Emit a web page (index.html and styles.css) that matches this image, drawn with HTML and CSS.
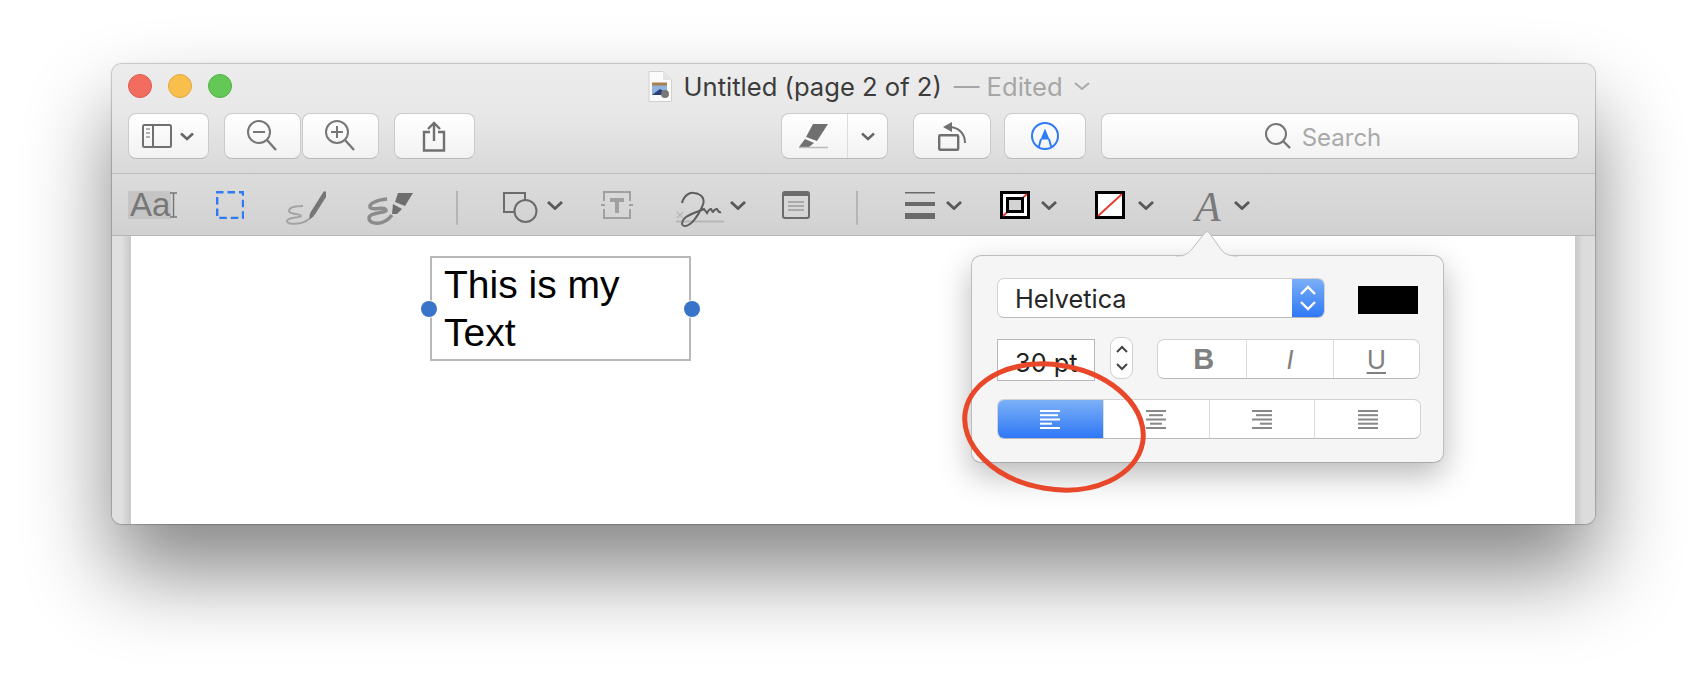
FILE: index.html
```html
<!DOCTYPE html>
<html lang="en">
<head>
    <meta charset="UTF-8">
    <meta name="viewport" content="width=device-width, initial-scale=1.0">
    <title>Untitled (page 2 of 2)</title>
    <link rel="stylesheet" href="styles.css">
</head>
<body>
    <div class="window">
        <div class="titlebar">
            <div class="lights">
                <span class="light red"></span>
                <span class="light yellow"></span>
                <span class="light green"></span>
            </div>
            <div class="title">
                <svg class="doc-icon" width="24" height="31" viewBox="0 0 24 31">
                    <path d="M1 .5H15L23.5 9V30.5H1Z" fill="#fbfbfb" stroke="#d0d0d0"/>
                    <path d="M15 .5V9H23.5Z" fill="#e4e4e4"/>
                    <rect x="4" y="14" width="15" height="10" fill="#8fb2de"/>
                    <rect x="4" y="11.5" width="15" height="3" fill="#a8814f"/>
                    <path d="M4 24L12 18L19 22V24Z" fill="#2d3f7c"/>
                    <circle cx="17" cy="23" r="4" fill="#777"/>
                </svg>
                <span class="doc-name">Untitled (page 2 of 2)</span>
                <span class="doc-state">— Edited</span>
                <svg class="title-chev" width="16" height="8" viewBox="0 0 16 8"><path d="M1 1L8 7L15 1" fill="none" stroke="#aaa" stroke-width="2"/></svg>
            </div>
        </div>

        <div class="toolbar">
            <button class="btn btn-sidebar">
                <svg width="30" height="24" viewBox="0 0 30 24" fill="none" stroke="#707070" stroke-width="2">
                    <rect x="1" y="1" width="28" height="22" rx="1.5"/>
                    <path d="M11 1V23"/>
                    <path d="M4 5H8M4 9H8M4 13H8" stroke-width="1.5" stroke="#999"/>
                </svg>
                <svg width="14" height="9" viewBox="0 0 14 9"><path d="M1 1.5L7 7L13 1.5" fill="none" stroke="#666" stroke-width="2.6"/></svg>
            </button>
            <button class="btn btn-zoom">
                <svg width="30" height="32" viewBox="0 0 30 32" fill="none" stroke="#777" stroke-width="2">
                    <circle cx="12" cy="12" r="11"/>
                    <path d="M6 12H18"/>
                    <path d="M20 20L29 30" stroke-width="2.4"/>
                </svg>
            </button>
            <button class="btn btn-zoom btn-zoom-in">
                <svg width="30" height="32" viewBox="0 0 30 32" fill="none" stroke="#777" stroke-width="2">
                    <circle cx="12" cy="12" r="11"/>
                    <path d="M6 12H18M12 6V18"/>
                    <path d="M20 20L29 30" stroke-width="2.4"/>
                </svg>
            </button>
            <button class="btn btn-share">
                <svg width="24" height="31" viewBox="0 0 24 31" fill="none" stroke="#707070" stroke-width="2.4">
                    <path d="M8 11H2V29.5H22V11H16"/>
                    <path d="M12 20V2M6 8L12 2L18 8"/>
                </svg>
            </button>

            <div class="btn btn-pen">
                <div class="pen-main">
                    <svg width="32" height="26" viewBox="0 0 32 26">
                        <path d="M16 1H31L20 18L9 14Z" fill="#707070"/>
                        <path d="M8 16L17 20L12 24H2Z" fill="#707070"/>
                        <path d="M2 24.5H31" stroke="#bbb" stroke-width="1.5"/>
                    </svg>
                </div>
                <div class="pen-chev">
                    <svg width="14" height="9" viewBox="0 0 14 9"><path d="M1 1.5L7 7L13 1.5" fill="none" stroke="#666" stroke-width="2.4"/></svg>
                </div>
            </div>
            <button class="btn btn-rotate">
                <svg width="29" height="30" viewBox="0 0 29 30" fill="none" stroke="#707070" stroke-width="2.4">
                    <rect x="1.2" y="14.2" width="19" height="14.6" rx="1"/>
                    <path d="M11 6C20 6 27 12 27 22" stroke-width="2"/>
                    <path d="M14 1L5 6L14 11Z" fill="#707070" stroke="none"/>
                </svg>
            </button>
            <button class="btn btn-markup">
                <svg width="28" height="28" viewBox="0 0 28 28" fill="none" stroke="#2f7bf6" stroke-width="2">
                    <circle cx="14" cy="14" r="13"/>
                    <path d="M14 6.5L9.5 17.5H18.5Z" fill="#2f7bf6" stroke="none"/>
                    <path d="M10 17L7.5 26M18 17L20.5 26"/>
                </svg>
            </button>
            <div class="search">
                <svg width="26" height="26" viewBox="0 0 26 26" fill="none" stroke="#757575" stroke-width="2">
                    <circle cx="11" cy="11" r="10"/>
                    <path d="M18 18L25 25" stroke-width="2.4"/>
                </svg>
                <span>Search</span>
            </div>
        </div>

        <div class="tools">
            <div class="tool-text"><span class="aa">Aa</span>
                <svg class="ibeam" width="9" height="26" viewBox="0 0 9 26" fill="none" stroke="#777" stroke-width="1.5"><path d="M1 1H8M4.5 1V25M1 25H8"/></svg>
            </div>
            <svg class="tool t-select" width="28" height="28" viewBox="0 0 28 28" fill="none" stroke="#2f7bf6" stroke-width="2.4">
                <path d="M0 1.2H27V27H1.2V1.2" stroke-dasharray="7.5 4"/>
            </svg>
            <svg class="tool t-sketch" width="40" height="36" viewBox="0 0 40 36" fill="none">
                <path d="M39 3L27 22" stroke="#767676" stroke-width="5" stroke-linecap="round"/>
                <path d="M24 22L23 29L28 25Z" fill="#767676"/>
                <path d="M17 15C8 15 3 17 3 20C3 24 15 22 15 25C15 27 1 26 1 30C1 34 16 34 23 28" stroke="#a3a3a3" stroke-width="2"/>
            </svg>
            <svg class="tool t-draw" width="48" height="36" viewBox="0 0 48 36" fill="none">
                <path d="M32 2H47L39 15L29 11Z" fill="#6e6e6e"/>
                <path d="M27 13L36 18L31 23H26Z" fill="#6e6e6e"/>
                <path d="M21 8C10 9 3 13 4 16C5 20 19 15 20 19C21 22 3 21 3 27C3 34 18 35 26 24" stroke="#8c8c8c" stroke-width="3.5"/>
            </svg>
            <span class="divider d-one"></span>
            <svg class="tool t-shape" width="35" height="32" viewBox="0 0 35 32" fill="none" stroke="#6c6c6c" stroke-width="2">
                <path d="M12 21H1V2H22V9"/>
                <circle cx="22.5" cy="20" r="11"/>
            </svg>
            <svg class="chev" width="16" height="9" viewBox="0 0 16 9"><path d="M1 1L8 7.5L15 1" fill="none" stroke="#585858" stroke-width="2.8"/></svg>
            <svg class="tool t-box" width="32" height="28" viewBox="0 0 32 28" fill="none" stroke="#a0a0a0" stroke-width="2">
                <path d="M3 10V1H29V10M3 18V27H29V18"/>
                <path d="M0 14H4M28 14H32"/>
                <path d="M9 7H23V11H18V22H14V11H9Z" fill="#a0a0a0" stroke="none"/>
            </svg>
            <svg class="tool t-sign" width="50" height="37" viewBox="0 0 50 37" fill="none">
                <path d="M0 30.5H48" stroke="#b6b6b6" stroke-width="2"/>
                <path d="M1 21L7 27M7 21L1 27" stroke="#b6b6b6" stroke-width="1.2"/>
                <path d="M6 12C8 4 14 1 18 2C26 3 30 8 26 16C22 25 15 35 9 35C4 35 6 29 10 26C16 22 24 20 28 18L31 22C32 20 33 18 35 18C36 19 36 21 37 21C38 19 39 18 41 18C42 20 43 22 45 21" stroke="#5e5e5e" stroke-width="2"/>
            </svg>
            <svg class="chev c-sign" width="16" height="9" viewBox="0 0 16 9"><path d="M1 1L8 7.5L15 1" fill="none" stroke="#585858" stroke-width="2.8"/></svg>
            <svg class="tool t-note" width="28" height="28" viewBox="0 0 28 28" fill="none" stroke="#6c6c6c">
                <rect x="1" y="1" width="26" height="26" rx="2" stroke-width="2"/>
                <path d="M1 3H27" stroke-width="4"/>
                <path d="M6 11H22M6 15H22M6 19H22" stroke="#9a9a9a" stroke-width="1.5"/>
            </svg>
            <span class="divider d-two"></span>
            <svg class="tool t-line" width="30" height="28" viewBox="0 0 30 28">
                <rect y="0" width="30" height="1.5" fill="#6a6a6a"/>
                <rect y="10" width="30" height="4" fill="#6a6a6a"/>
                <rect y="21" width="30" height="6" fill="#6a6a6a"/>
            </svg>
            <svg class="chev c-wide" width="16" height="9" viewBox="0 0 16 9"><path d="M1 1L8 7.5L15 1" fill="none" stroke="#585858" stroke-width="2.8"/></svg>
            <svg class="tool t-border" width="30" height="28" viewBox="0 0 30 28" fill="none">
                <rect x="1.5" y="1.5" width="27" height="25" fill="#fff" stroke="#000" stroke-width="3"/>
                <path d="M3 25L27 3" stroke="#e8392a" stroke-width="1.8"/>
                <rect x="7.5" y="7.5" width="15" height="13" stroke="#000" stroke-width="3" fill="#d3d3d3"/>
            </svg>
            <svg class="chev c-wide" width="16" height="9" viewBox="0 0 16 9"><path d="M1 1L8 7.5L15 1" fill="none" stroke="#585858" stroke-width="2.8"/></svg>
            <svg class="tool t-fill" width="30" height="28" viewBox="0 0 30 28" fill="none">
                <rect x="1.5" y="1.5" width="27" height="25" fill="#fff" stroke="#000" stroke-width="3"/>
                <path d="M3 25L27 3" stroke="#e8392a" stroke-width="1.8"/>
            </svg>
            <svg class="chev c-fill" width="16" height="9" viewBox="0 0 16 9"><path d="M1 1L8 7.5L15 1" fill="none" stroke="#585858" stroke-width="2.8"/></svg>
            <span class="font-a">A</span>
            <svg class="chev c-wide" width="16" height="9" viewBox="0 0 16 9"><path d="M1 1L8 7.5L15 1" fill="none" stroke="#585858" stroke-width="2.8"/></svg>
        </div>

        <div class="content">
            <div class="margin-left"></div>
            <div class="page">
                <div class="textbox">
                    This is my Text
                    <span class="handle handle-left"></span>
                    <span class="handle handle-right"></span>
                </div>
            </div>
            <div class="margin-right"></div>
        </div>

        <!-- font popover -->
        <div class="popover">
            <svg class="popover-arrow" width="62" height="26" viewBox="0 0 62 26">
                <path d="M0 25C8 25 12 23 16 18L28 3C30 0 32 0 34 3L44 17C48 23 52 25 62 25V26H0Z" fill="#f5f5f5"/>
                <path d="M0 25C8 25 12 23 16 18L28 3C30 0 32 0 34 3L44 17C48 23 52 25 62 25" fill="none" stroke="#bdbdbd"/>
            </svg>
            <div class="pop-row row-font">
                <div class="select">
                    <span class="select-name">Helvetica</span>
                    <span class="select-arrows">
                        <svg width="16" height="28" viewBox="0 0 16 28" fill="none" stroke="#fff" stroke-width="2.4"><path d="M1 10L8 3L15 10M1 18L8 25L15 18"/></svg>
                    </span>
                </div>
                <span class="swatch"></span>
            </div>
            <div class="pop-row row-size">
                <div class="size-field">30 pt</div>
                <div class="stepper">
                    <svg width="12" height="28" viewBox="0 0 12 28" fill="none" stroke="#444" stroke-width="2"><path d="M1 8L6 3L11 8M1 20L6 25L11 20"/></svg>
                </div>
                <div class="segments seg-style">
                    <div class="seg seg-b">B</div>
                    <div class="seg seg-i">I</div>
                    <div class="seg seg-u">U</div>
                </div>
            </div>
            <div class="pop-row row-align">
                <div class="segments seg-align">
                    <div class="seg seg-on">
                        <svg width="20" height="19" viewBox="0 0 20 19" fill="#fff"><rect width="20" height="2"/><rect y="4.2" width="18" height="2"/><rect y="8.5" width="20" height="2"/><rect y="12.7" width="12" height="2"/><rect y="17" width="20" height="2"/></svg>
                    </div>
                    <div class="seg">
                        <svg width="20" height="19" viewBox="0 0 20 19" fill="#888"><rect width="20" height="2"/><rect x="3" y="4.2" width="14" height="2"/><rect y="8.5" width="20" height="2"/><rect x="4" y="12.7" width="12" height="2"/><rect y="17" width="20" height="2"/></svg>
                    </div>
                    <div class="seg">
                        <svg width="20" height="19" viewBox="0 0 20 19" fill="#888"><rect width="20" height="2"/><rect x="4" y="4.2" width="16" height="2"/><rect y="8.5" width="20" height="2"/><rect x="8" y="12.7" width="12" height="2"/><rect y="17" width="20" height="2"/></svg>
                    </div>
                    <div class="seg">
                        <svg width="20" height="19" viewBox="0 0 20 19" fill="#888"><rect width="20" height="2"/><rect y="4.2" width="20" height="2"/><rect y="8.5" width="20" height="2"/><rect y="12.7" width="20" height="2"/><rect y="17" width="20" height="2"/></svg>
                    </div>
                </div>
            </div>
        </div>

        <!-- red hand drawn circle on top of everything -->
        <svg class="red-circle" width="200" height="146" viewBox="0 0 200 146">
            <ellipse cx="100" cy="74" rx="90" ry="62" transform="rotate(10 100 74)" fill="none" stroke="#e8472a" stroke-width="5"/>
        </svg>
    </div>
</body>
</html>
```

FILE: styles.css
```css
body {
    margin: 0;
    padding: 64px 0 0 112px;
    height: 620px;
    overflow: hidden;
    background-color: #fff;
    font-family: Inter, "Liberation Sans", sans-serif;
}
button {
    font-family: inherit;
    padding: 0;
}
svg {
    display: block;
    flex: none;
}

/* Window */
.window {
    position: relative;
    width: 1483px;
    height: 460px;
    display: flex;
    flex-direction: column;
    border-radius: 10px;
    box-shadow: 0 48px 85px rgba(0, 0, 0, 0.48), 0 0 1px 1px rgba(0, 0, 0, 0.2);
}

/* Title bar */
.titlebar {
    height: 49px;
    box-sizing: border-box;
    padding: 0 0 6px 15.5px;
    display: flex;
    align-items: center;
    border-radius: 10px 10px 0 0;
    background: linear-gradient(#ececec, #e8e8e8);
}
.lights {
    display: flex;
    gap: 16px;
}
.light {
    width: 22px;
    height: 22px;
    border-radius: 50%;
    border: 1px solid;
}
.red {
    background-color: #f26d5f;
    border-color: #dc5b4e;
}
.yellow {
    background-color: #f8bf4c;
    border-color: #e0a83e;
}
.green {
    background-color: #64c856;
    border-color: #52b145;
}
.title {
    margin: 1px 0 0 416px;
    display: flex;
    align-items: center;
    font-size: 25.6px;
    white-space: nowrap;
}
.doc-icon {
    margin-right: 12px;
}
.doc-name {
    color: #3c3c3c;
}
.doc-state {
    margin-left: 12px;
    color: #a6a6a6;
}
.title-chev {
    margin-left: 11px;
}

/* Toolbar */
.toolbar {
    height: 61px;
    box-sizing: border-box;
    display: flex;
    align-items: flex-start;
    padding: 0 16px 0 15.5px;
    border-bottom: 1px solid #bcbcbc;
    background: linear-gradient(#e8e8e8, #d9d9d9);
}
.btn {
    height: 46px;
    box-sizing: border-box;
    display: flex;
    align-items: center;
    justify-content: center;
    border: 1px solid #cbcbcb;
    border-bottom-color: #b9b9b9;
    border-radius: 8px;
    background: linear-gradient(#fff, #f2f2f2);
}
.btn-sidebar {
    width: 81px;
    gap: 8px;
}
.btn-zoom {
    width: 77px;
    margin-left: 15px;
}
.btn-zoom-in {
    margin-left: 1px;
}
.btn-share {
    width: 81px;
    margin-left: 15px;
}
.btn-pen {
    width: 107px;
    margin-left: auto;
    justify-content: flex-start;
}
.pen-main {
    width: 66px;
    height: 100%;
    box-sizing: border-box;
    padding-right: 4px;
    display: flex;
    align-items: center;
    justify-content: center;
    border-right: 1.5px solid #dcdcdc;
}
.pen-chev {
    flex: 1;
    display: flex;
    justify-content: center;
}
.btn-rotate {
    width: 78px;
    margin-left: 25px;
}
.btn-markup {
    width: 82px;
    margin-left: 13px;
}
.search {
    width: 478px;
    height: 46px;
    box-sizing: border-box;
    margin-left: 15px;
    padding-right: 34px;
    display: flex;
    align-items: center;
    justify-content: center;
    gap: 11px;
    border: 1px solid #cbcbcb;
    border-bottom-color: #b9b9b9;
    border-radius: 8px;
    background: linear-gradient(#fff, #f2f2f2);
    color: #a9a9a9;
    font-size: 24px;
}
.search span {
    margin-top: 3px;
}

/* Markup tools */
.tools {
    height: 62px;
    box-sizing: border-box;
    display: flex;
    align-items: flex-start;
    padding: 17px 0 0 16px;
    border-bottom: 1px solid #b6b6b6;
    background: linear-gradient(#dcdcdc, #d1d1d1);
}
.tool-text {
    display: flex;
    width: 50px;
    height: 28px;
}
.aa {
    width: 46px;
    height: 28px;
    line-height: 28px;
    padding-left: 2px;
    box-sizing: border-box;
    background-color: #c5c5c5;
    color: #777;
    font-family: "Liberation Sans", sans-serif;
    font-size: 33px;
    white-space: nowrap;
}
.ibeam {
    margin: 1px 0 0 -2px;
}
.chev {
    margin: 10px 0 0 9px;
}
.divider {
    width: 2px;
    height: 34px;
    background-color: #b5b5b5;
}
.t-select { margin-left: 38px; }
.t-sketch { margin-left: 42px; }
.t-draw { margin-left: 40px; }
.d-one { margin-left: 42px; }
.t-shape { margin-left: 45px; }
.t-box { margin-left: 38px; }
.t-sign { margin-left: 43px; }
.c-sign { margin-left: 4px; }
.t-note { margin-left: 36px; }
.d-two { margin-left: 46px; }
.t-line { margin-left: 47px; margin-top: 1px; }
.c-wide { margin-left: 11px; }
.c-fill { margin-left: 13px; }
.t-border { margin-left: 38px; }
.t-fill { margin-left: 38px; }
.font-a {
    margin-left: 41px;
    width: 28px;
    color: #7a7a7a;
    font-family: "Liberation Serif", serif;
    font-style: italic;
    font-size: 42px;
    line-height: 33px;
}

/* Document area */
.content {
    flex: 1;
    display: flex;
    overflow: hidden;
    border-radius: 0 0 10px 10px;
}
.margin-left {
    width: 19px;
    background: linear-gradient(to right, #e0e0e0 50%, #c8c8c8);
}
.margin-right {
    width: 20px;
    background: linear-gradient(to right, #c8c8c8, #dcdcdc 40%);
}
.page {
    flex: 1;
    position: relative;
    background-color: #fff;
}
.textbox {
    position: absolute;
    left: 299px;
    top: 20px;
    width: 261px;
    height: 105px;
    box-sizing: border-box;
    padding: 2.5px 12px 0;
    border: 2px solid #b8b8b8;
    color: #000;
    font-family: "Liberation Sans", sans-serif;
    font-size: 39px;
    line-height: 48px;
}
.handle {
    position: absolute;
    top: 43px;
    width: 16px;
    height: 16px;
    border-radius: 50%;
    background-color: #3874c9;
    box-shadow: 0 0 0 1px #fff;
}
.handle-left {
    left: -11px;
}
.handle-right {
    right: -11px;
}

/* Popover */
.popover {
    position: absolute;
    left: 859px;
    top: 191px;
    width: 473px;
    height: 208px;
    box-sizing: border-box;
    padding: 22px 0 0 25px;
    display: flex;
    flex-direction: column;
    border: 1px solid #bdbdbd;
    border-bottom-color: #a8a8a8;
    border-radius: 10px;
    background-color: #f5f5f5;
    box-shadow: 0 12px 32px rgba(0, 0, 0, 0.28);
}
.popover-arrow {
    position: absolute;
    left: 204px;
    top: -25px;
}
.pop-row {
    display: flex;
    align-items: flex-start;
}
.row-size {
    margin-top: 21px;
}
.row-align {
    margin-top: 18px;
}
.select {
    width: 328px;
    height: 40px;
    box-sizing: border-box;
    display: flex;
    align-items: center;
    border: 1px solid #d2d2d2;
    border-bottom-color: #b9b9b9;
    border-radius: 7px;
    background-color: #fff;
    overflow: hidden;
}
.select-name {
    flex: 1;
    padding-left: 17px;
    color: #262626;
    font-size: 25.3px;
}
.select-arrows {
    width: 32px;
    height: 40px;
    display: flex;
    align-items: center;
    justify-content: center;
    background: linear-gradient(#7cb0f7, #2e77f5);
}
.swatch {
    width: 60px;
    height: 28px;
    margin: 8px 0 0 33px;
    background-color: #000;
}
.size-field {
    width: 98px;
    height: 42px;
    box-sizing: border-box;
    padding-left: 17px;
    border: 1px solid #b9b9b9;
    background-color: #fff;
    color: #222;
    font-size: 25.3px;
    line-height: 46px;
    overflow: hidden;
}
.stepper {
    width: 23px;
    height: 42px;
    box-sizing: border-box;
    margin: -2px 0 0 15px;
    display: flex;
    align-items: center;
    justify-content: center;
    border: 1px solid #d0d0d0;
    border-radius: 9px;
    background-color: #fff;
}
.segments {
    display: flex;
    height: 40px;
    box-sizing: border-box;
    border: 1px solid #d2d2d2;
    border-bottom-color: #b9b9b9;
    border-radius: 7px;
    background-color: #fff;
    overflow: hidden;
}
.seg-style {
    width: 263px;
    margin-left: 24px;
}
.seg-align {
    width: 424px;
}
.seg {
    flex: 1;
    display: flex;
    align-items: center;
    justify-content: center;
    border-left: 1px solid #dcdcdc;
    color: #808080;
    font-size: 26px;
}
.seg:first-child {
    border-left: 0;
}
.seg-on {
    background: linear-gradient(#7cb0f7, #2e77f5);
}
.seg-b {
    padding-left: 3px;
    font-family: "Liberation Sans", sans-serif;
    font-weight: bold;
    font-size: 29px;
}
.seg-i {
    font-style: italic;
}
.seg-u {
    text-decoration: underline;
    text-underline-offset: 3px;
    text-decoration-thickness: 2px;
}
.red-circle {
    position: absolute;
    left: 842px;
    top: 289px;
}
```
